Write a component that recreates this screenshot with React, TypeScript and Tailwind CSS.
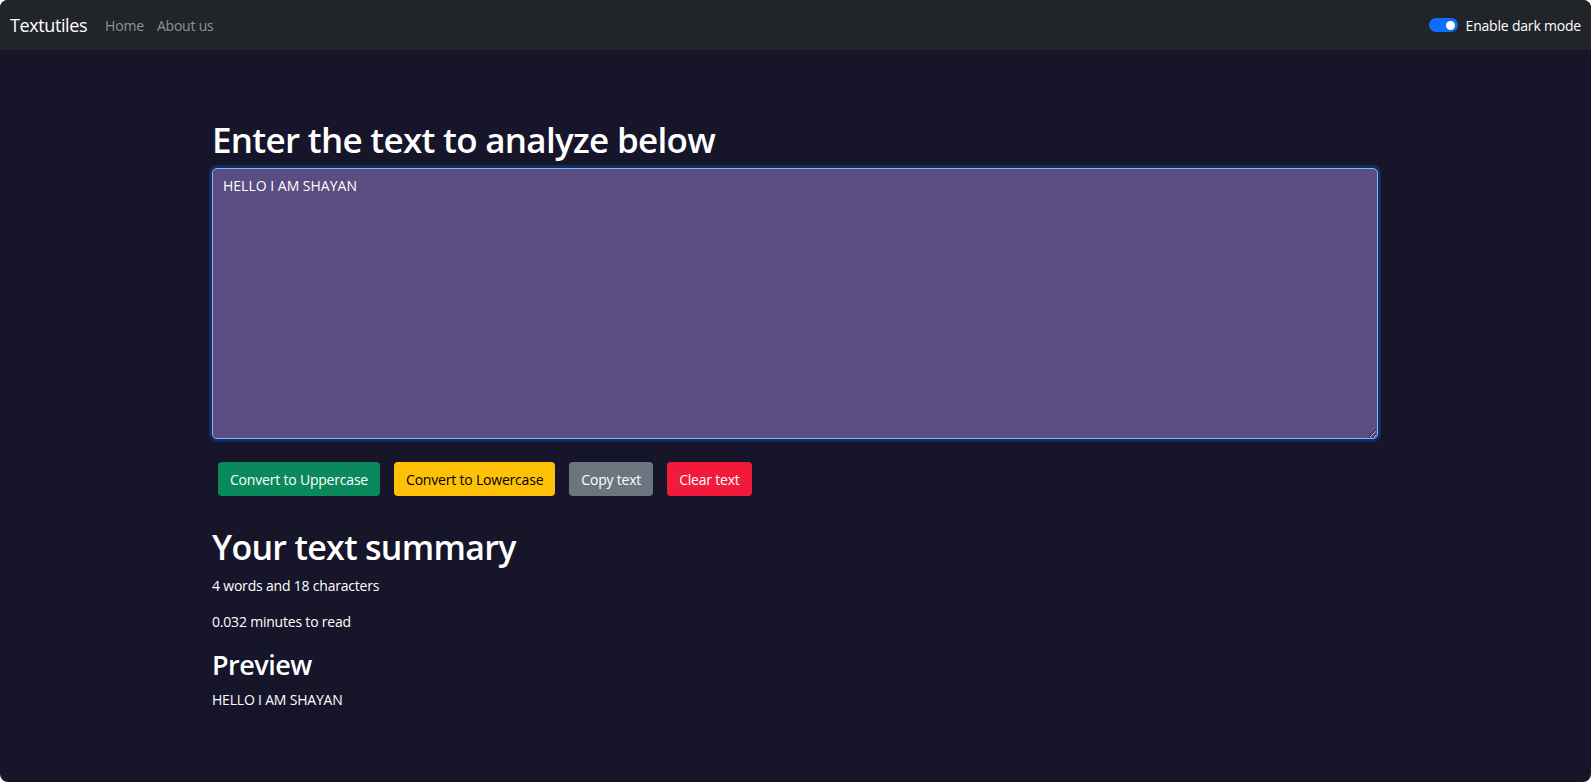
import { useState } from 'react';

const font = { fontFamily: '"Open Sans", "Noto Sans", sans-serif' };

function Navbar() {
  return (
    <nav className="h-[50px] bg-[#212529] flex items-center justify-between pl-[10px] pr-[10px]">
      <div className="flex items-center">
        <a className="text-[18px] text-white tracking-[-0.4px] mr-[18px]">Textutiles</a>
        <a className="text-[14px] text-[#8f9296] tracking-[-0.2px] mr-[13px]">Home</a>
        <a className="text-[14px] text-[#8f9296] tracking-[-0.2px]">About us</a>
      </div>
      <div className="flex items-center gap-[8px]">
        <div className="w-[29px] h-[14px] rounded-full bg-[#0d6efd] flex items-center justify-end pr-[3px]">
          <div className="w-[9px] h-[9px] rounded-full bg-white" />
        </div>
        <span className="text-[14px] text-white tracking-[-0.2px]">Enable dark mode</span>
      </div>
    </nav>
  );
}

export default function App() {
  const [text, setText] = useState('HELLO I AM SHAYAN');
  const words = text.split(/\s+/).filter((w) => w.length > 0).length;

  return (
    <div className="bg-white w-full h-[782px]" style={font}>
      <div className="w-[1591px] h-[782px] rounded-lg overflow-hidden bg-[#16152a] flex flex-col">
        <Navbar />

        <main className="w-[1166px] ml-[212px] pt-[69px] text-white">
          <h1 className="text-[35px] font-semibold leading-[1.2] tracking-[-0.7px] mb-[7px]">
            Enter the text to analyze below
          </h1>
          <textarea
            value={text}
            onChange={(e) => setText(e.target.value)}
            className="block w-full h-[271px] bg-[#5a4d82] text-white text-[14px] leading-[1.5] px-[10px] py-[6px] rounded-[5px] border border-[#86b7fe] outline-none shadow-[0_0_0_3px_rgba(13,110,253,0.25)]"
          />

          <div className="flex items-center gap-[14px] mt-[23px] pl-[6px]">
            <button className="h-[34px] px-[12px] text-[14px] tracking-[-0.2px] text-white bg-[#0a8a5c] rounded-[4px]">Convert to Uppercase</button>
            <button className="h-[34px] px-[12px] text-[14px] tracking-[-0.2px] text-black bg-[#ffc107] rounded-[4px]">Convert to Lowercase</button>
            <button className="h-[34px] px-[12px] text-[14px] tracking-[-0.2px] text-white bg-[#6c757d] rounded-[4px]">Copy text</button>
            <button className="h-[34px] px-[12px] text-[14px] tracking-[-0.2px] text-white bg-[#f11a3b] rounded-[4px]">Clear text</button>
          </div>

          <h2 className="text-[34px] font-semibold leading-[1.2] tracking-[-0.7px] mt-[31px]">Your text summary</h2>
          <p className="text-[14px] leading-[1.5] tracking-[-0.2px] mt-[7px]">
            {words} words and {text.length + 1} characters
          </p>
          <p className="text-[14px] leading-[1.5] tracking-[-0.2px] mt-[15px]">{(0.008 * words).toFixed(3)} minutes to read</p>
          <h2 className="text-[27px] font-semibold leading-[1.2] tracking-[-0.5px] mt-[17px]">Preview</h2>
          <p className="text-[14px] leading-[1.5] tracking-[-0.2px] mt-[8px]">{text}</p>
        </main>
      </div>
    </div>
  );
}
